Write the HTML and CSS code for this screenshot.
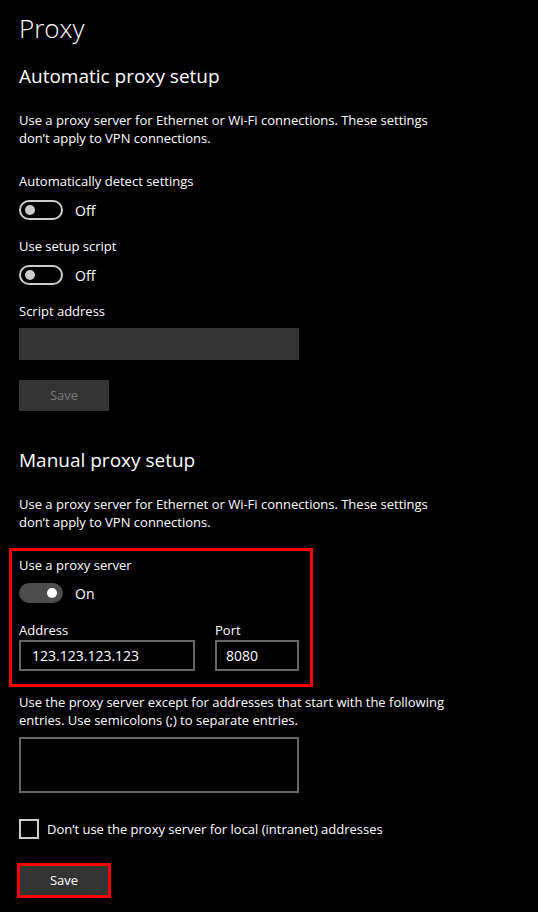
FILE: index.html
```html
<html>
<head><title>Proxy</title>
<link rel="stylesheet" href="styles.css">
</head>
<body>
<div class="page">

  <h1>Proxy</h1>

  <h2>Automatic proxy setup</h2>

  <p class="desc">Use a proxy server for Ethernet or Wi-Fi connections. These settings
  <br>don&rsquo;t apply to VPN connections.</p>

  <div class="label first">Automatically detect settings</div>
  <div class="switch-row">
    <span class="switch"><span class="knob"></span></span>
    <span class="state">Off</span>
  </div>

  <div class="label">Use setup script</div>
  <div class="switch-row">
    <span class="switch"><span class="knob"></span></span>
    <span class="state">Off</span>
  </div>

  <div class="label">Script address</div>
  <div class="field filled"></div>

  <div class="button disabled">Save</div>

  <h2 class="second">Manual proxy setup</h2>

  <p class="desc">Use a proxy server for Ethernet or Wi-Fi connections. These settings
  <br>don&rsquo;t apply to VPN connections.</p>

  <div class="mark">
    <div class="label">Use a proxy server</div>
    <div class="switch-row">
      <span class="switch on"><span class="knob"></span></span>
      <span class="state">On</span>
    </div>

    <div class="pair">
      <div class="col">
        <div class="label small">Address</div>
        <div class="field boxed address">123.123.123.123</div>
      </div>
      <div class="col">
        <div class="label small">Port</div>
        <div class="field boxed port">8080</div>
      </div>
    </div>
  </div>

  <p class="desc except">Use the proxy server except for addresses that start with the following
  <br>entries. Use semicolons (;) to separate entries.</p>

  <div class="field boxed area"></div>

  <div class="check-row">
    <span class="check"></span>
    <span>Don&rsquo;t use the proxy server for local (intranet) addresses</span>
  </div>

  <div class="button primary">Save</div>

</div>
</body>
</html>
```

FILE: styles.css
```css
body {
background: #000000;
color: #ffffff;
font-family: "Open Sans", "Noto Sans", sans-serif;
font-size: 13px;
margin: 0;
padding: 0;
}

.page {
padding-left: 19px;
padding-top: 8px;
}

h1 {
font-size: 26px;
font-weight: 300;
line-height: 40px;
margin: 0;
}

h2 {
font-size: 19px;
font-weight: 400;
line-height: 28px;
margin: 14px 0 0 0;
}

h2.second {
margin-top: 35px;
}

.desc {
line-height: 18px;
margin: 21px 0 0 0;
}

.desc.except {
margin-top: 6px;
}

.label {
line-height: 19px;
margin-top: 17px;
}

.label.first {
margin-top: 25px;
}

.switch-row {
display: flex;
align-items: center;
gap: 12px;
margin-top: 9px;
height: 20px;
}

.switch {
box-sizing: border-box;
width: 44px;
height: 20px;
border: 2px solid #cccccc;
border-radius: 10px;
display: flex;
align-items: center;
padding-left: 4px;
}

.knob {
width: 10px;
height: 10px;
border-radius: 50%;
background: #cccccc;
}

.switch.on {
border-color: #4d4d4d;
background: #4d4d4d;
justify-content: flex-end;
padding-left: 0;
padding-right: 4px;
}

.switch.on .knob {
background: #ffffff;
}

.state {
font-size: 14px;
}

.label + .field {
margin-top: 7px;
}

.field {
box-sizing: border-box;
height: 32px;
width: 280px;
}

.field.filled {
background: #333333;
}

.button {
box-sizing: border-box;
width: 90px;
height: 31px;
background: #333333;
text-align: center;
line-height: 31px;
font-size: 13px;
margin-top: 20px;
}

.button.disabled {
color: #7a7a7a;
}

.button.primary {
margin-top: 26px;
outline: 3px solid #ff0000;
outline-offset: -1px;
}

.mark {
box-sizing: border-box;
width: 304px;
margin: 17px 0 0 -10px;
padding: 0 0 13px 7px;
border: 3px solid #ff0000;
}

.mark .label:first-child {
margin-top: 5px;
}

.mark .switch-row {
margin-top: 8px;
}

.pair {
display: flex;
gap: 20px;
}

.col .label.small {
margin-top: 19px;
line-height: 17px;
}

.field.boxed {
border: 2px solid #666666;
height: 31px;
line-height: 27px;
padding-left: 11px;
font-size: 14px;
}

.col .field.boxed {
margin-top: 1px;
}

.field.address {
width: 176px;
}

.field.port {
width: 84px;
padding-left: 9px;
}

.field.area {
height: 56px;
margin-top: 8px;
}

.check-row {
display: flex;
align-items: center;
gap: 8px;
margin-top: 26px;
font-size: 13px;
}

.check {
box-sizing: border-box;
width: 20px;
height: 20px;
border: 2px solid #cccccc;
}
```
